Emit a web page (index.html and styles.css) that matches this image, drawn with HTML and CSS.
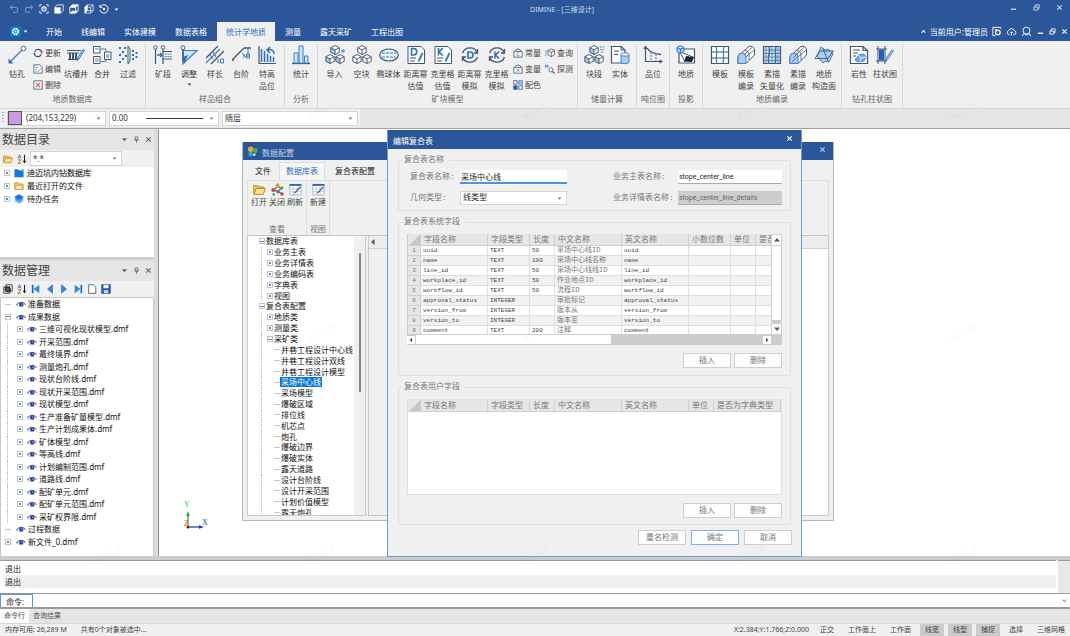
FILE: index.html
```html
<!DOCTYPE html>
<html lang="zh-CN">
<head>
<meta charset="utf-8">
<title>DIMINE - [三维设计]</title>
<link rel="stylesheet" href="styles.css">
</head>
<body>
<svg class="defs" aria-hidden="true">
  <symbol id="i-undo" viewBox="0 0 12 12"><path d="M4 1.500 1.500 4 4 6.500M1.500 4H7.500a3 3 0 0 1 0 6H5" fill="none" stroke="currentColor" stroke-width="1.200"/></symbol>
  <symbol id="i-redo" viewBox="0 0 12 12"><path d="M8 1.500 10.500 4 8 6.500M10.500 4H4.500a3 3 0 0 0 0 6H7" fill="none" stroke="currentColor" stroke-width="1.200"/></symbol>
  <symbol id="i-target" viewBox="0 0 12 12"><path d="M1 3.500V1H3.500M8.500 1H11V3.500M11 8.500V11H8.500M3.500 11H1V8.500" fill="none" stroke="currentColor"/><circle cx="6" cy="6" r="2.600" fill="none" stroke="currentColor" stroke-width="1.300"/><circle cx="6" cy="6" r="1" fill="currentColor"/></symbol>
  <symbol id="i-box" viewBox="0 0 12 12"><path d="M1 4 4 1H11V8L8 11H1Z" fill="none" stroke="currentColor"/><path d="M1 4H8V11H1Z" fill="currentColor"/></symbol>
  <symbol id="i-box-top" viewBox="0 0 12 12"><path d="M1 4 4 1H11V8L8 11H1ZM1 4H8V11M8 4 11 1" fill="none" stroke="currentColor"/><path d="M1 11 4 8H11L8 11ZM1 4 4 1H11L8 4Z" fill="currentColor"/></symbol>
  <symbol id="i-box-side" viewBox="0 0 12 12"><path d="M1 4 4 1H11V8L8 11H1ZM1 4H8V11M8 4 11 1M4 1V8H11M4 8 1 11" fill="none" stroke="currentColor" stroke-width=".8"/><path d="M1 4 4 1V8L1 11Z" fill="currentColor"/></symbol>
  <symbol id="i-rotate" viewBox="0 0 12 12"><path d="M1.500 3.500A5 5 0 1 1 1 7M1 1V4H4" fill="none" stroke="currentColor" stroke-width="1.200"/><circle cx="6" cy="6" r="1.500" fill="currentColor"/></symbol>
  <symbol id="i-app" viewBox="0 0 12 12"><rect width="12" height="12" fill="#0c7ac4"/><circle cx="6" cy="6" r="3" fill="none" stroke="#fff" stroke-width="2" stroke-dasharray="1.800 .55"/><circle cx="6" cy="6" r="1" fill="#fff"/></symbol>
  <symbol id="i-min" viewBox="0 0 8 8"><path d="M1 6H7" stroke="currentColor" stroke-width="1.500"/></symbol>
  <symbol id="i-restore" viewBox="0 0 8 8"><path d="M1 3.500H5.500V7H1ZM2.500 3.500V1H7V5H5.500" fill="none" stroke="currentColor"/></symbol>
  <symbol id="i-close" viewBox="0 0 8 8"><path d="M1.500 1.500 6.500 6.500M6.500 1.500 1.500 6.500" stroke="currentColor" stroke-width="1.200"/></symbol>
  <symbol id="i-caret" viewBox="0 0 8 8"><path d="M1 2.500H7L4 6Z" fill="currentColor"/></symbol>
  <symbol id="i-up" viewBox="0 0 8 8"><path d="M1 5.500H7L4 2Z" fill="currentColor"/></symbol>
  <symbol id="i-left" viewBox="0 0 8 8"><path d="M5.500 1V7L2 4Z" fill="currentColor"/></symbol>
  <symbol id="i-right" viewBox="0 0 8 8"><path d="M2.500 1V7L6 4Z" fill="currentColor"/></symbol>
  <symbol id="i-chev" viewBox="0 0 8 8"><path d="M1 2.500 4 6 7 2.500" fill="none" stroke="currentColor"/></symbol>
  <symbol id="i-chevup" viewBox="0 0 8 8"><path d="M1 6 4 2.500 7 6" fill="none" stroke="currentColor" stroke-width="1.700"/></symbol>
  <symbol id="i-pin" viewBox="0 0 8 8"><path d="M2.500 1H5.500V4.500H2.500ZM1.500 4.500H6.500M4 4.500V8" fill="none" stroke="currentColor" stroke-width=".9"/></symbol>
  <symbol id="i-usergear" viewBox="0 0 12 12"><path d="M10.500 3V1.500H2V10.500H5" fill="none" stroke="currentColor"/><circle cx="7.500" cy="7" r="2.500" fill="none" stroke="currentColor" stroke-width="1.300"/><path d="M4 4H6" stroke="currentColor"/></symbol>
  <symbol id="i-cloud" viewBox="0 0 12 12"><path d="M4 9.500H3A2.400 2.400 0 0 1 3 5 3.200 3.200 0 0 1 9 5 2.300 2.300 0 0 1 9 9.500H8M6 10.500V6.500M4.300 8 6 6.300 7.700 8" fill="none" stroke="currentColor"/></symbol>
  <symbol id="i-user" viewBox="0 0 12 12"><circle cx="6" cy="5" r="3.800" fill="none" stroke="currentColor"/><path d="M3 8 1.500 11M9 8 10.500 11M4 9.500H8" fill="none" stroke="currentColor"/></symbol>

  <symbol id="r-drill" viewBox="0 0 20 20"><path d="M15.500 4.500 3 17" stroke="#4b78b0" stroke-width="1.200"/><circle cx="16.500" cy="3.500" r="2.300" fill="#fff" stroke="#50607a"/><path d="M1.500 18.500V13.500L6.500 18.500Z" fill="#2b6fc4"/></symbol>
  <symbol id="r-trench" viewBox="0 0 20 20"><path d="M1 5.500H15M1 8H13M2 14.500H12" stroke="#44546a" stroke-width="1.200"/><path d="M4 8V14M7 8V14M10 8V14" stroke="#44546a" stroke-width="2"/><path d="M18.500 5 13 14 11 16 11.800 12.500 17 4.500Z" fill="#a9cdf5" stroke="#3b7fcc"/></symbol>
  <symbol id="r-merge" viewBox="0 0 20 20"><g fill="#fff" stroke="#44546a"><path d="M1.500 1.500H8V8H1.500ZM1.500 11.500H8V18.500H1.500ZM12.500 7H19V14.500H12.500Z"/></g><path d="M3 4H6.500M3 14H6.500M3 16H6.500M14 10H17.500M14 12H17.500" stroke="#3b7fcc"/><path d="M9 4H14V6.500M9 16.500H14V15" fill="none" stroke="#3b7fcc"/></symbol>
  <symbol id="r-filter" viewBox="0 0 20 20"><g fill="#2b6fc4"><path d="M1 2h2v2H1zM4 6h2v2H4zM1 9h2v2H1zM4 13h2v2H4zM1 16h2v2H1zM6 2h2v2H6zM7 10h2v2H7zM14 5h2v2h-2zM14 9h2v2h-2zM14 13h2v2h-2zM17.500 7h2v2h-2zM17.500 11h2v2h-2z"/></g><path d="M10 1 12 4V16L10 19Z" fill="#fff" stroke="#44546a"/></symbol>
  <symbol id="r-seg" viewBox="0 0 20 20"><path d="M2.500 4V19M10 4V19" stroke="#44546a" stroke-width="1.200"/><circle cx="2.500" cy="2.500" r="1.700" fill="#fff" stroke="#44546a"/><circle cx="10" cy="2.500" r="1.700" fill="#fff" stroke="#44546a"/><path d="M4 10H9M7 8 9 10 7 12" stroke="#2b6fc4" fill="none" stroke-width="1.300"/><path d="M10 6.500H19M10 14H19" stroke="#44546a"/><path d="M12 9H19M12 11.500H19" stroke="#2b6fc4" stroke-dasharray="1.500 1"/></symbol>
  <symbol id="r-adjust" viewBox="0 0 20 20"><path d="M4 5V19L18 5.500H5" fill="#cfe3fa" stroke="#3b7fcc" stroke-width="1.200"/><path d="M4 5V17" stroke="#44546a" stroke-width="1.500"/><circle cx="4" cy="2.700" r="2" fill="#fff" stroke="#44546a"/><path d="M4 12 9 10 5 19Z" fill="#2b6fc4"/></symbol>
  <symbol id="r-length" viewBox="0 0 20 20"><path d="M1 13 13 1M6 19 19 6" stroke="#44546a" stroke-width="1.300"/><path d="M1 18 15 4M8 7 11 12M5 10 8 14" stroke="#3b7fcc" stroke-width="1.200"/><path d="M13 14V18M15.500 14H18.500V18H15.500Z" fill="none" stroke="#3b7fcc"/></symbol>
  <symbol id="r-step" viewBox="0 0 20 20"><path d="M1 15 13 3M1 15H3M13 3H20" stroke="#44546a" stroke-width="1.300"/><path d="M17 3V12M11 8 15 12" stroke="#3b7fcc"/><path d="M13 9V13M15.500 9H18.500V13H15.500Z" fill="none" stroke="#3b7fcc"/></symbol>
  <symbol id="r-high" viewBox="0 0 20 20"><path d="M2 1V18.500H19" fill="none" stroke="#44546a" stroke-width="1.200"/><path d="M4.500 17V4M7.500 17V6M10.500 17V9M13.500 17V11M16.500 17V12" stroke="#2b6fc4" stroke-width="1.500"/><path d="M17 9C17 5 14 4 11 5M13 2 10 5 13 8" stroke="#2b6fc4" fill="none" stroke-width="1.500"/></symbol>
  <symbol id="r-stat" viewBox="0 0 20 20"><path d="M1 18.500H19" stroke="#44546a" stroke-width="1.300"/><path d="M3 8H7V18H3ZM8 1H12V18H8ZM13.500 11H17V18H13.500Z" fill="#cfe3fa" stroke="#3b7fcc"/></symbol>
  <symbol id="cube" viewBox="0 0 10 10"><path d="M5 .6 9.200 2.700V7.300L5 9.500 .8 7.300V2.700Z" fill="#fff" stroke="#44546a" stroke-width=".95"/><path d="M.8 2.700 5 5 9.200 2.700M5 5V9.500" fill="none" stroke="#44546a" stroke-width=".95"/></symbol>
  <symbol id="cubeb" viewBox="0 0 10 10"><path d="M5 .6 9.200 2.700V7.300L5 9.500 .8 7.300V2.700Z" fill="#fff"/><path d="M.8 2.700 5 5V9.500L.8 7.300Z" fill="#9cc8f8"/><path d="M5 .6 9.200 2.700V7.300L5 9.500 .8 7.300V2.700ZM.8 2.700 5 5 9.200 2.700M5 5V9.500" fill="none" stroke="#44546a" stroke-width=".95"/></symbol>
  <symbol id="r-import" viewBox="0 0 20 20"><use href="#cubeb" x="5" y="0" width="10" height="10"/><use href="#cubeb" x="0" y="9" width="10" height="10"/><use href="#cubeb" x="10" y="9" width="10" height="10"/><path d="M16 6H20M18 4V8" stroke="#3b7fcc"/></symbol>
  <symbol id="r-cubes" viewBox="0 0 20 20"><use href="#cube" x="5" y="0" width="10" height="10"/><use href="#cube" x="0" y="9" width="10" height="10"/><use href="#cube" x="10" y="9" width="10" height="10"/></symbol>
  <symbol id="r-ellipse" viewBox="0 0 20 20"><ellipse cx="10" cy="10" rx="9.300" ry="6" fill="#e8f2fd" stroke="#44546a" stroke-width="1.200"/><path d="M3 8H17M3 12H17" stroke="#3b7fcc" stroke-dasharray="3 1"/></symbol>
  <symbol id="r-docD" viewBox="0 0 20 20"><path d="M2 1.500H15L18.500 5V18.500H2Z" fill="#fff" stroke="#44546a"/><path d="M5.500 3.500H7.500A3 3 0 0 1 7.500 10H5.500Z" fill="none" stroke="#2b6fc4" stroke-width="1.600"/><path d="M4 13H10M4 16H9" stroke="#44546a"/><path d="M16.500 8 12.500 16.500" stroke="#3b7fcc" stroke-width="2"/></symbol>
  <symbol id="r-docK" viewBox="0 0 20 20"><path d="M2 1.500H15L18.500 5V18.500H2Z" fill="#fff" stroke="#44546a"/><path d="M5.500 3V10.500M10 3 6 7 10 10.500" fill="none" stroke="#2b6fc4" stroke-width="1.600"/><path d="M4 13H10M4 16H9" stroke="#44546a"/><path d="M16.500 8 12.500 16.500" stroke="#3b7fcc" stroke-width="2"/></symbol>
  <symbol id="r-cirD" viewBox="0 0 20 20"><path d="M2.500 8A8 8 0 0 1 17.500 8M17.500 12A8 8 0 0 1 2.500 12M17.500 4V8H14M2.500 16V12H6" fill="none" stroke="#44546a" stroke-width="1.300"/><path d="M8 7H10A3 3 0 0 1 10 13H8Z" fill="none" stroke="#2b6fc4" stroke-width="1.600"/></symbol>
  <symbol id="r-cirK" viewBox="0 0 20 20"><path d="M2.500 8A8 8 0 0 1 17.500 8M17.500 12A8 8 0 0 1 2.500 12M17.500 4V8H14M2.500 16V12H6" fill="none" stroke="#44546a" stroke-width="1.300"/><path d="M8 6.500V13.500M12 6.500 8.500 10 12 13.500" fill="none" stroke="#2b6fc4" stroke-width="1.500"/></symbol>
  <symbol id="r-blocks" viewBox="0 0 20 20"><use href="#cubeb" x="5" y="0" width="10" height="10"/><use href="#cubeb" x="0" y="9" width="10" height="10"/><use href="#cubeb" x="10" y="9" width="10" height="10"/><path d="M16 2H20M16 4.500H20M17 7H20" stroke="#3b7fcc" stroke-dasharray="1.500 1"/></symbol>
  <symbol id="r-solid" viewBox="0 0 20 20"><path d="M12 18H1.500V1.500H11L15 5V8" fill="#fff" stroke="#44546a" stroke-width="1.200"/><path d="M4 6H9M4 9.500H8M11 1.500V5H15" fill="none" stroke="#44546a"/><path d="M11 9.500V17A4 1.700 0 0 0 19 17V9.500" fill="#a9cdf5" stroke="#3b7fcc"/><ellipse cx="15" cy="9.500" rx="4" ry="1.700" fill="#fff" stroke="#3b7fcc"/></symbol>
  <symbol id="r-grade" viewBox="0 0 20 20"><path d="M2.500 2V16.500H18M1 4 2.500 1.500 4 4M16.500 15 19 16.500 16.500 18" fill="none" stroke="#44546a" stroke-width="1.200"/><path d="M4 3C7 8 12 9 18 9.500" fill="none" stroke="#44546a" stroke-width="1.300"/><path d="M8 7V16M13 9V16" stroke="#3b7fcc" stroke-dasharray="2 1"/></symbol>
  <symbol id="r-proj" viewBox="0 0 20 20"><path d="M3 4H18.500V18H3Z" fill="#fff" stroke="#44546a" stroke-width="1.200"/><path d="M5 7 17 12M5 9 9 17" stroke="#44546a"/><path d="M10 11 18 12 16 17 8 16.500Z" fill="#16213a"/><path d="M4.500 .7 8 2.500V6.500L4.500 8.500 1 6.500V2.500ZM1 2.500 4.500 4.500 8 2.500M4.500 4.500V8.500" fill="#a9d4ff" stroke="#2b6fc4"/></symbol>
  <symbol id="r-tpl" viewBox="0 0 20 20"><path d="M1.500 1.500H18.500V18.500H1.500ZM1.500 7H18.500M1.500 13H18.500" fill="#fff" stroke="#44546a" stroke-width="1.200"/><path d="M6 1.500C8 6 5 12 7 18.500M14 1.500C12 7 15 12 13 18.500" fill="none" stroke="#3b7fcc" stroke-width="1.200"/></symbol>
  <symbol id="r-tunnel" viewBox="0 0 20 20"><path d="M2 18.500V12A4 4 0 0 1 5 8.500L13 1.500A4 4 0 0 1 18.500 4.500V10L10 18.500Z" fill="#fff" stroke="#44546a"/><path d="M2 18.500V12A4 4 0 0 1 10 12V18.500Z" fill="#a9cdf5" stroke="#3b7fcc"/><path d="M8.500 9 16 2.500M10 12 18 5M9 5 13 8V15" fill="none" stroke="#44546a" stroke-width=".8"/></symbol>
  <symbol id="r-vector" viewBox="0 0 20 20"><path d="M1.500 1.500H18.500V18.500H1.500Z" fill="#cfe3fa" stroke="#44546a" stroke-width="1.200"/><path d="M1.500 5H18.500M1.500 8.500H18.500M1.500 12H18.500M1.500 15.500H18.500M4 1.500V18.500M10 1.500V18.500M16 1.500V18.500" stroke="#44546a" stroke-width=".6"/><path d="M7 1.500C9 6 5 12 7 18.500M14 1.500C12 7 15 12 13 18.500" fill="none" stroke="#2b6fc4" stroke-width="1.500"/></symbol>
  <symbol id="r-sketch" viewBox="0 0 20 20"><path d="M2 18.500V12A4 4 0 0 1 5 8.500L13 1.500A4 4 0 0 1 18.500 4.500V10L10 18.500Z" fill="#fff" stroke="#44546a"/><path d="M2 18.500V12A4 4 0 0 1 10 12V18.500Z" fill="#a9cdf5" stroke="#3b7fcc"/><path d="M8.500 9 16 2.500M10 12 18 5M9 5 13 8V15" fill="none" stroke="#44546a" stroke-width=".8"/><path d="M5 13 14 4M4 17 9 12" stroke="#3b7fcc"/></symbol>
  <symbol id="r-plane" viewBox="0 0 20 20"><path d="M7 2 11 5 14 4 19 9 15 17 12 16 9 18 3 11Z" fill="#a9cdf5" stroke="#3b7fcc"/><path d="M1 13.500 6 6H19.500L14 13.500ZM9 3.500 14 16" fill="none" stroke="#44546a" stroke-width=".9"/></symbol>
  <symbol id="r-rock" viewBox="0 0 20 20"><path d="M1.500 1.500H14L18.500 5.500V18.500H1.500ZM14 1.500V5.500H18.500" fill="#fff" stroke="#44546a" stroke-width="1.200"/><path d="M4 5H11M4 8H9M4 11H7" stroke="#44546a"/><path d="M6 15 10 10 15 9 17 12 15 16 9 17Z" fill="#6aaef5" stroke="#2b6fc4" stroke-width=".8"/><path d="M10 10 12 13 17 12M12 13 11 17" stroke="#fff" fill="none" stroke-width=".8"/></symbol>
  <symbol id="r-col" viewBox="0 0 20 20"><path d="M3 1V19M10 1V19M1 4H12M1 16H12" stroke="#44546a"/><path d="M4 4.500H9V15.500H4Z" fill="#1f5fc0"/><path d="M18.500 6 12 15 10 16.500 11 13.500 17 5Z" fill="#a9cdf5" stroke="#3b7fcc"/></symbol>

  <symbol id="s-refresh" viewBox="0 0 12 12"><path d="M2 4.500A4.500 4.500 0 0 1 10.500 5M10 7.500A4.500 4.500 0 0 1 1.500 7" fill="none" stroke="#44546a" stroke-width="1.400"/><path d="M8.500 4.500H12L10.500 7ZM0 7.500H3.500L1.500 5Z" fill="#2b6fc4"/></symbol>
  <symbol id="s-edit" viewBox="0 0 12 12"><path d="M1 1H8L11 4V11H1Z" fill="#fff" stroke="#44546a"/><path d="M9.500 5 6 9.500M3 4H6M3 6.500H5M3 9H4.500" stroke="#3b7fcc"/></symbol>
  <symbol id="s-del" viewBox="0 0 12 12"><path d="M1 1H11V11H1Z" fill="#fff" stroke="#44546a"/><path d="M3.500 3.500 8.500 8.500M8.500 3.500 3.500 8.500" stroke="#e2552f" stroke-width="1.400"/></symbol>
  <symbol id="s-const" viewBox="0 0 12 12"><path d="M1 4H11V11H1ZM2.500 4 4 1.500H8L9.500 4" fill="#fff" stroke="#44546a"/><path d="M7.800 6A2 2 0 1 0 7.800 9" stroke="#3b7fcc" fill="none"/></symbol>
  <symbol id="s-var" viewBox="0 0 12 12"><path d="M1 4H11V11H1ZM2.500 4 4 1.500H8L9.500 4" fill="#fff" stroke="#44546a"/><path d="M4 5.500 8 9.500M8 5.500 4 9.500" stroke="#3b7fcc"/></symbol>
  <symbol id="s-color" viewBox="0 0 12 12"><path d="M.8 .8H5V5H.8ZM7 7H11.200V11.200H7Z" fill="#fff" stroke="#44546a"/><path d="M7 .8H11.200V5H7Z" fill="#a9cdf5" stroke="#3b7fcc"/><path d="M.3 6.500H5.500V11.700H.3Z" fill="#1f5fc0"/></symbol>
  <symbol id="s-query" viewBox="0 0 12 12"><path d="M7.500 1 11.500 3V8L7.500 10.500 3.500 8V3ZM3.500 3 7.500 5.500 11.500 3M7.500 5.500V10.500" fill="#fff" stroke="#44546a"/><path d="M0 3.500H2M0 6H2M0 8.500H2" stroke="#3b7fcc"/></symbol>
  <symbol id="s-probe" viewBox="0 0 12 12"><circle cx="7" cy="7" r="2.500" fill="#fff" stroke="#44546a"/><path d="M9 9 11.500 11.500" stroke="#44546a" stroke-width="1.300"/><path d="M1 1V5M3 1V4M0 2.500H4.500" stroke="#3b7fcc"/></symbol>

  <symbol id="t-folder" viewBox="0 0 12 12"><path d="M.7 10V2.500H4.500L5.500 3.700H9.500V5" fill="#f7c95a" stroke="#b07a1c" stroke-width=".8"/><path d="M.8 10.500 3 5H11.500L9.500 10.500Z" fill="#ffe08a" stroke="#b07a1c" stroke-width=".8"/></symbol>
  <symbol id="t-sort" viewBox="0 0 12 12"><path d="M1 5.500 3 .8 5 5.500M1.800 4H4.200" fill="none" stroke="#3b6fc0"/><path d="M1.200 7H4.800L1.200 11.200H4.800" fill="none" stroke="#a0603a"/><path d="M9 1V9" stroke="#222" stroke-width="1.300"/><path d="M6.800 8H11.200L9 11.500Z" fill="#222"/></symbol>
  <symbol id="t-db" viewBox="0 0 12 12"><path d="M.5 1.500H5L6 3H11.500V11H.5Z" fill="#0f7be0"/><path d="M6 3 11.500 1V3Z" fill="#4cc04c"/></symbol>
  <symbol id="t-open" viewBox="0 0 12 12"><path d="M.8 10V2H5L6 3.500H11V10Z" fill="#f5c95c" stroke="#b98a2a" stroke-width=".8"/><path d="M1 5.500H9L11 10H2.500Z" fill="#ffe9a8" stroke="#b98a2a" stroke-width=".6"/></symbol>
  <symbol id="t-layers" viewBox="0 0 12 12"><path d="M6 5.500 12 8.500 6 11.800 0 8.500Z" fill="#7cbcf5"/><path d="M6 3 12 6 6 9.200 0 6Z" fill="#3f9bee"/><path d="M6 .3 12 3.500 6 6.800 0 3.500Z" fill="#1179dc"/></symbol>
  <symbol id="t-eye" viewBox="0 0 12 12"><path d="M.5 7.500C2.500 3 9 2.500 11.500 7" fill="none" stroke="#5566a8" stroke-width="1.400"/><circle cx="6.300" cy="6.600" r="2.700" fill="#2c3f95"/><circle cx="6.900" cy="6" r=".7" fill="#fff"/><path d="M1 8Q5 9.800 9 9" fill="none" stroke="#9aa6d4" stroke-width=".8"/></symbol>
  <symbol id="t-stack" viewBox="0 0 12 12"><path d="M3.500 1H11V8.500H3.500ZM1 3.500H8.500V11H1Z" fill="#fff" stroke="#222"/><circle cx="5.500" cy="6.500" r="3" fill="#44546a" stroke="#111"/></symbol>
  <symbol id="t-first" viewBox="0 0 12 12"><path d="M2 1V11" stroke="#1668c8" stroke-width="2"/><path d="M10 1V11L3 6Z" fill="#2f8be8"/></symbol>
  <symbol id="t-prev" viewBox="0 0 12 12"><path d="M9 1V11L3 6Z" fill="#2f8be8" stroke="#1668c8" stroke-width=".7"/></symbol>
  <symbol id="t-next" viewBox="0 0 12 12"><path d="M3 1V11L9 6Z" fill="#2f8be8" stroke="#1668c8" stroke-width=".7"/></symbol>
  <symbol id="t-last" viewBox="0 0 12 12"><path d="M10 1V11" stroke="#1668c8" stroke-width="2"/><path d="M2 1V11L9 6Z" fill="#2f8be8"/></symbol>
  <symbol id="t-page" viewBox="0 0 12 12"><path d="M2 .8H7.500L10.500 3.800V11.200H2Z" fill="#fff" stroke="#44546a"/></symbol>
  <symbol id="t-save" viewBox="0 0 12 12"><path d="M.8 .8H11.200V11.200H.8Z" fill="#2f62b8" stroke="#1c3f80" stroke-width=".8"/><path d="M3 1H9V5H3Z" fill="#fff"/><path d="M3.500 7.500H8.500V11H3.500Z" fill="#cfd8ea"/></symbol>
  <symbol id="w-logo" viewBox="0 0 12 12"><circle cx="4" cy="3.500" r="3" fill="#f2a531"/><circle cx="9" cy="5" r="2.700" fill="#49b04c"/><circle cx="4" cy="9" r="2.600" fill="#31a2e6"/><circle cx="8" cy="9.500" r="1.500" fill="#e8e04a"/></symbol>
  <symbol id="w-tree" viewBox="0 0 12 12"><path d="M6 3 2.500 7 6.500 7.500 10 10M6 3 9.500 5 6.500 7.500" stroke="#555" fill="none"/><g><circle cx="6" cy="2" r="1.800" fill="#d8a030"/><circle cx="2" cy="6.500" r="1.800" fill="#d64534"/><circle cx="10" cy="4.500" r="1.500" fill="#4fae3e"/><circle cx="6.500" cy="8" r="1.600" fill="#3d73d0"/><circle cx="10.200" cy="10.200" r="1.600" fill="#d64534"/><circle cx="2.500" cy="10.500" r="1.200" fill="#49b04c"/></g></symbol>
  <symbol id="w-form" viewBox="0 0 12 12"><path d="M.8 1.500H11.200V11H.8Z" fill="#fff" stroke="#8aa6cf" stroke-width=".7"/><path d="M.5 1H11.500V2.600H.5Z" fill="#2b5ca8"/><path d="M1 5.500H11M1 8H11M4 3V11M7.500 3V11" stroke="#9db8dd" stroke-width=".6"/><path d="M10.500 3.500 5 9.500" stroke="#5b6472" stroke-width="1.200"/></symbol>
  <symbol id="axes" viewBox="0 0 30 32"><path d="M8 27V14" stroke="#1d9a3c" stroke-width="1.200"/><path d="M8 11 6.300 16H9.700Z" fill="#1d9a3c"/><path d="M8 27H20" stroke="#1238c0" stroke-width="1.200"/><path d="M24 27 19 25.300V28.700Z" fill="#1238c0"/><circle cx="8" cy="27" r="1.500" fill="#8a1a10"/></symbol>
</svg>

<header class="titlebar">
  <div class="quick">
    <button class="ib dim" aria-label="撤销"><svg class="ic"><use href="#i-undo"/></svg></button>
    <button class="ib dim" aria-label="重做"><svg class="ic"><use href="#i-redo"/></svg></button>
    <button class="ib" aria-label="定位"><svg class="ic"><use href="#i-target"/></svg></button>
    <button class="ib" aria-label="前视图"><svg class="ic"><use href="#i-box"/></svg></button>
    <button class="ib" aria-label="俯视图"><svg class="ic"><use href="#i-box-top"/></svg></button>
    <button class="ib" aria-label="侧视图"><svg class="ic"><use href="#i-box-side"/></svg></button>
    <button class="ib" aria-label="旋转"><svg class="ic"><use href="#i-rotate"/></svg></button>
    <button class="ib more" aria-label="自定义"><svg class="ic mini"><use href="#i-caret"/></svg></button>
  </div>
  <h1 class="apptitle">DIMINE - [三维设计]</h1>
  <div class="winctl">
    <button class="ib" aria-label="最小化"><svg class="ic tiny"><use href="#i-min"/></svg></button>
    <button class="ib" aria-label="还原"><svg class="ic tiny"><use href="#i-restore"/></svg></button>
    <button class="ib" aria-label="关闭"><svg class="ic tiny"><use href="#i-close"/></svg></button>
  </div>
</header>

<nav class="tabs">
  <button class="appbtn" aria-label="应用菜单"><svg class="ic"><use href="#i-app"/></svg><svg class="ic mini"><use href="#i-caret"/></svg></button>
  <button class="tab">开始</button>
  <button class="tab">线编辑</button>
  <button class="tab">实体建模</button>
  <button class="tab">数据表格</button>
  <button class="tab active">统计学地质</button>
  <button class="tab">测量</button>
  <button class="tab">露天采矿</button>
  <button class="tab">工程出图</button>
  <div class="account">
    <svg class="ic mini"><use href="#i-chevup"/></svg>
    <span>当前用户:管理员</span>
    <button class="ib" aria-label="设置"><svg class="ic"><use href="#i-usergear"/></svg></button>
    <button class="ib" aria-label="云"><svg class="ic"><use href="#i-cloud"/></svg></button>
    <button class="ib" aria-label="用户"><svg class="ic"><use href="#i-user"/></svg></button>
    <button class="ib" aria-label="最小化"><svg class="ic tiny"><use href="#i-min"/></svg></button>
    <button class="ib" aria-label="还原"><svg class="ic tiny"><use href="#i-restore"/></svg></button>
    <button class="ib" aria-label="关闭"><svg class="ic tiny"><use href="#i-close"/></svg></button>
  </div>
</nav>

<section class="ribbon">
  <div class="group wide"><div class="tools">
    <button class="big"><svg><use href="#r-drill"/></svg>钻孔</button>
    <div class="small"><button><svg><use href="#s-refresh"/></svg>更新</button><button><svg><use href="#s-edit"/></svg>编辑</button><button><svg><use href="#s-del"/></svg>删除</button></div>
    <button class="big"><svg><use href="#r-trench"/></svg>坑槽井</button>
    <button class="big"><svg><use href="#r-merge"/></svg>合并</button>
    <button class="big"><svg><use href="#r-filter"/></svg>过滤</button>
  </div><h2>地质数据库</h2></div>
  <div class="group wide"><div class="tools">
    <button class="big"><svg><use href="#r-seg"/></svg>矿段</button>
    <button class="big"><svg><use href="#r-adjust"/></svg>调整<svg class="drop"><use href="#i-caret"/></svg></button>
    <button class="big"><svg><use href="#r-length"/></svg>样长</button>
    <button class="big"><svg><use href="#r-step"/></svg>台阶</button>
    <button class="big"><svg><use href="#r-high"/></svg>特高<br>品位</button>
  </div><h2>样品组合</h2></div>
  <div class="group"><div class="tools">
    <button class="big"><svg><use href="#r-stat"/></svg>统计</button>
  </div><h2>分析</h2></div>
  <div class="group roomy"><div class="tools">
    <button class="big"><svg><use href="#r-import"/></svg>导入</button>
    <button class="big"><svg><use href="#r-cubes"/></svg>空块</button>
    <button class="big"><svg><use href="#r-ellipse"/></svg>椭球体</button>
    <button class="big"><svg><use href="#r-docD"/></svg>距离幂<br>估值</button>
    <button class="big"><svg><use href="#r-docK"/></svg>克里格<br>估值</button>
    <button class="big"><svg><use href="#r-cirD"/></svg>距离幂<br>模拟</button>
    <button class="big"><svg><use href="#r-cirK"/></svg>克里格<br>模拟</button>
    <div class="small"><button><svg><use href="#s-const"/></svg>常量</button><button><svg><use href="#s-var"/></svg>变量</button><button><svg><use href="#s-color"/></svg>配色</button></div>
    <div class="small"><button><svg><use href="#s-query"/></svg>查询</button><button><svg><use href="#s-probe"/></svg>探测</button></div>
  </div><h2>矿块模型</h2></div>
  <div class="group"><div class="tools">
    <button class="big"><svg><use href="#r-blocks"/></svg>块段</button>
    <button class="big"><svg><use href="#r-solid"/></svg>实体</button>
  </div><h2>储量计算</h2></div>
  <div class="group"><div class="tools">
    <button class="big"><svg><use href="#r-grade"/></svg>品位</button>
  </div><h2>吨位图</h2></div>
  <div class="group"><div class="tools">
    <button class="big"><svg><use href="#r-proj"/></svg>地质</button>
  </div><h2>投影</h2></div>
  <div class="group wide"><div class="tools">
    <button class="big"><svg><use href="#r-tpl"/></svg>模板</button>
    <button class="big"><svg><use href="#r-tunnel"/></svg>模板<br>编录</button>
    <button class="big"><svg><use href="#r-vector"/></svg>素描<br>矢量化</button>
    <button class="big"><svg><use href="#r-sketch"/></svg>素描<br>编录</button>
    <button class="big"><svg><use href="#r-plane"/></svg>地质<br>构造面</button>
  </div><h2>地质编录</h2></div>
  <div class="group wide"><div class="tools">
    <button class="big"><svg><use href="#r-rock"/></svg>岩性</button>
    <button class="big"><svg><use href="#r-col"/></svg>柱状图</button>
  </div><h2>钻孔柱状图</h2></div>
</section>

<section class="props">
  <div class="propsin">
    <span class="grip"></span>
    <label class="combo c-color"><span class="swatch"></span><select aria-label="颜色"><option>(204,153,229)</option></select><svg class="ic mini"><use href="#i-caret"/></svg></label>
    <label class="combo c-line"><select aria-label="线宽"><option>0.00</option></select><span class="rule"></span><svg class="ic mini"><use href="#i-caret"/></svg></label>
    <label class="combo c-layer"><select aria-label="线型"><option>随层</option></select><svg class="ic mini"><use href="#i-caret"/></svg></label>
  </div>
</section>

<main class="work">
  <aside class="dock">
    <section class="pane catalog">
      <header class="panehead"><h2>数据目录</h2>
        <button class="ib" aria-label="菜单"><svg class="ic tiny"><use href="#i-caret"/></svg></button><button class="ib" aria-label="固定"><svg class="ic tiny"><use href="#i-pin"/></svg></button><button class="ib" aria-label="关闭"><svg class="ic tiny"><use href="#i-close"/></svg></button></header>
      <div class="panebar">
        <button class="ib" aria-label="打开"><svg class="ic"><use href="#t-folder"/></svg></button><button class="ib" aria-label="排序"><svg class="ic"><use href="#t-sort"/></svg></button>
        <label class="combo filter"><select aria-label="过滤"><option>*.*</option></select><svg class="ic mini"><use href="#i-caret"/></svg></label>
      </div>
      <ul class="tree files">
        <li><i class="ex"></i><svg class="ic"><use href="#t-db"/></svg><span class="soft">迪迈坑内钻数据库</span></li>
        <li><i class="ex"></i><svg class="ic"><use href="#t-open"/></svg><span>最近打开的文件</span></li>
        <li><i class="ex"></i><svg class="ic"><use href="#t-layers"/></svg><span>待办任务</span></li>
      </ul>
    </section>
    <section class="pane manage">
      <header class="panehead"><h2>数据管理</h2>
        <button class="ib" aria-label="菜单"><svg class="ic tiny"><use href="#i-caret"/></svg></button><button class="ib" aria-label="固定"><svg class="ic tiny"><use href="#i-pin"/></svg></button><button class="ib" aria-label="关闭"><svg class="ic tiny"><use href="#i-close"/></svg></button></header>
      <div class="panebar">
        <button class="ib" aria-label="显示"><svg class="ic"><use href="#t-stack"/></svg></button><button class="ib" aria-label="排序"><svg class="ic"><use href="#t-sort"/></svg></button><button class="ib" aria-label="首个"><svg class="ic"><use href="#t-first"/></svg></button><button class="ib" aria-label="上一个"><svg class="ic"><use href="#t-prev"/></svg></button><button class="ib" aria-label="下一个"><svg class="ic"><use href="#t-next"/></svg></button><button class="ib" aria-label="末个"><svg class="ic"><use href="#t-last"/></svg></button><button class="ib" aria-label="新建"><svg class="ic"><use href="#t-page"/></svg></button><button class="ib" aria-label="保存"><svg class="ic"><use href="#t-save"/></svg></button>
      </div>
      <ul class="tree layers">
        <li><i class="ex none"></i><svg class="ic"><use href="#t-eye"/></svg><span class="soft">准备数据</span></li>
        <li><i class="ex open"></i><svg class="ic"><use href="#t-eye"/></svg><span>成果数据</span></li>
        <li class="sub"><i class="ex"></i><svg class="ic"><use href="#t-eye"/></svg><span>三维可视化现状模型.dmf</span></li>
        <li class="sub"><i class="ex"></i><svg class="ic"><use href="#t-eye"/></svg><span>开采范围.dmf</span></li>
        <li class="sub"><i class="ex"></i><svg class="ic"><use href="#t-eye"/></svg><span>最终境界.dmf</span></li>
        <li class="sub"><i class="ex"></i><svg class="ic"><use href="#t-eye"/></svg><span>测量炮孔.dmf</span></li>
        <li class="sub"><i class="ex"></i><svg class="ic"><use href="#t-eye"/></svg><span>现状台阶线.dmf</span></li>
        <li class="sub"><i class="ex"></i><svg class="ic"><use href="#t-eye"/></svg><span>现状开采范围.dmf</span></li>
        <li class="sub"><i class="ex"></i><svg class="ic"><use href="#t-eye"/></svg><span>现状模型.dmf</span></li>
        <li class="sub"><i class="ex"></i><svg class="ic"><use href="#t-eye"/></svg><span>生产准备矿量模型.dmf</span></li>
        <li class="sub"><i class="ex"></i><svg class="ic"><use href="#t-eye"/></svg><span>生产计划成果体.dmf</span></li>
        <li class="sub"><i class="ex"></i><svg class="ic"><use href="#t-eye"/></svg><span>矿体模型.dmf</span></li>
        <li class="sub"><i class="ex"></i><svg class="ic"><use href="#t-eye"/></svg><span>等高线.dmf</span></li>
        <li class="sub"><i class="ex"></i><svg class="ic"><use href="#t-eye"/></svg><span>计划编制范围.dmf</span></li>
        <li class="sub"><i class="ex"></i><svg class="ic"><use href="#t-eye"/></svg><span>道路线.dmf</span></li>
        <li class="sub"><i class="ex"></i><svg class="ic"><use href="#t-eye"/></svg><span>配矿单元.dmf</span></li>
        <li class="sub"><i class="ex"></i><svg class="ic"><use href="#t-eye"/></svg><span>配矿单元范围.dmf</span></li>
        <li class="sub"><i class="ex"></i><svg class="ic"><use href="#t-eye"/></svg><span>采矿权界限.dmf</span></li>
        <li><i class="ex none"></i><svg class="ic"><use href="#t-eye"/></svg><span>过程数据</span></li>
        <li><i class="ex"></i><svg class="ic"><use href="#t-eye"/></svg><span>新文件_0.dmf</span></li>
      </ul>
    </section>
  </aside>

  <section class="canvas">
    <div class="axes"><svg><use href="#axes"/></svg><span class="ay">Y</span><span class="ax">X</span><span class="az">Z</span></div>

    <section class="win config">
      <header class="winhead"><svg class="ic"><use href="#w-logo"/></svg><h2>数据配置</h2><button class="ib" aria-label="关闭"><svg class="ic tiny"><use href="#i-close"/></svg></button></header>
      <nav class="ctabs"><button>文件</button><button class="active">数据库表</button><button>复合表配置</button></nav>
      <div class="cribbon">
        <div class="cgroup"><div class="ctools"><button><svg><use href="#t-folder"/></svg>打开</button><button><svg><use href="#w-tree"/></svg>关闭</button><button><svg><use href="#w-form"/></svg>刷新</button></div><h3>查看</h3></div>
        <div class="cgroup"><div class="ctools"><button><svg><use href="#w-form"/></svg>新建</button></div><h3>视图</h3></div>
      </div>
      <div class="cbody">
        <div class="ctree">
          <ul class="tree db">
            <li><i class="ex open"></i><span>数据库表</span></li>
            <li class="l1"><i class="ex"></i><span>业务主表</span></li>
            <li class="l1"><i class="ex"></i><span>业务详情表</span></li>
            <li class="l1"><i class="ex"></i><span>业务编码表</span></li>
            <li class="l1"><i class="ex"></i><span>字典表</span></li>
            <li class="l1"><i class="ex"></i><span>视图</span></li>
            <li><i class="ex open"></i><span>复合表配置</span></li>
            <li class="l1"><i class="ex"></i><span>地质类</span></li>
            <li class="l1"><i class="ex"></i><span>测量类</span></li>
            <li class="l1"><i class="ex open"></i><span>采矿类</span></li>
            <li class="l2"><i class="ex none"></i><span>井巷工程设计中心线</span></li>
            <li class="l2"><i class="ex none"></i><span>井巷工程设计双线</span></li>
            <li class="l2"><i class="ex none"></i><span>井巷工程设计模型</span></li>
            <li class="l2"><i class="ex none"></i><span class="sel">采场中心线</span></li>
            <li class="l2"><i class="ex none"></i><span>采场模型</span></li>
            <li class="l2"><i class="ex none"></i><span>爆破区域</span></li>
            <li class="l2"><i class="ex none"></i><span>排位线</span></li>
            <li class="l2"><i class="ex none"></i><span>机芯点</span></li>
            <li class="l2"><i class="ex none"></i><span>炮孔</span></li>
            <li class="l2"><i class="ex none"></i><span>爆破边界</span></li>
            <li class="l2"><i class="ex none"></i><span>爆破实体</span></li>
            <li class="l2"><i class="ex none"></i><span>露天道路</span></li>
            <li class="l2"><i class="ex none"></i><span>设计台阶线</span></li>
            <li class="l2"><i class="ex none"></i><span>设计开采范围</span></li>
            <li class="l2"><i class="ex none"></i><span>计划价值模型</span></li>
            <li class="l2"><i class="ex none"></i><span>露天炮孔</span></li>
          </ul>
          <div class="cscroll"><i></i></div>
        </div>
        <div class="cview"><div class="cviewhead"><svg class="ic tiny"><use href="#i-left"/></svg></div><div class="cviewbody"><i></i></div></div>
      </div>
    </section>

    <section class="win dialog" role="dialog" aria-labelledby="dlg">
      <header class="winhead"><h2 id="dlg">编辑复合表</h2><button class="ib" aria-label="关闭"><svg class="ic tiny"><use href="#i-close"/></svg></button></header>
      <form class="dbody">
        <fieldset>
          <legend>复合表名称</legend>
          <div class="fields">
            <label for="f1">复合表名称:</label><input id="f1" class="focus" value="采场中心线">
            <label for="f2" class="second">业务主表名称:</label><input id="f2" value="stope_center_line">
            <label for="f3">几何类型:</label><span class="combo geo"><select id="f3"><option>线类型</option></select><svg class="ic mini"><use href="#i-caret"/></svg></span>
            <label for="f4" class="second">业务详情表名称:</label><input id="f4" class="off" value="stope_center_line_details" disabled>
          </div>
        </fieldset>
        <fieldset>
          <legend>复合表系统字段</legend>
          <div class="grid">
            <div class="gridclip">
              <table class="sys">
                <colgroup><col class="k0"><col class="k3"><col class="k2"><col class="k1"><col class="k3"><col class="k3"><col class="k2"><col class="k1"><col class="k3"></colgroup>
                <thead><tr><th class="corner"></th><th>字段名称</th><th>字段类型</th><th>长度</th><th>中文名称</th><th>英文名称</th><th>小数位数</th><th>单位</th><th>是否为字典类型</th></tr></thead>
                <tbody>
                <tr><th>1</th><td>uuid</td><td>TEXT</td><td>50</td><td>采场中心线ID</td><td>uuid</td><td></td><td></td><td></td></tr>
                <tr><th>2</th><td>name</td><td>TEXT</td><td>100</td><td>采场中心线名称</td><td>name</td><td></td><td></td><td></td></tr>
                <tr><th>3</th><td>line_id</td><td>TEXT</td><td>50</td><td>采场中心线线ID</td><td>line_id</td><td></td><td></td><td></td></tr>
                <tr><th>4</th><td>workplace_id</td><td>TEXT</td><td>50</td><td>作业地点ID</td><td>workplace_id</td><td></td><td></td><td></td></tr>
                <tr><th>5</th><td>workflow_id</td><td>TEXT</td><td>50</td><td>流程ID</td><td>workflow_id</td><td></td><td></td><td></td></tr>
                <tr><th>6</th><td>approval_status</td><td>INTEGER</td><td></td><td>审批标记</td><td>approval_status</td><td></td><td></td><td></td></tr>
                <tr><th>7</th><td>version_from</td><td>INTEGER</td><td></td><td>版本从</td><td>version_from</td><td></td><td></td><td></td></tr>
                <tr><th>8</th><td>version_to</td><td>INTEGER</td><td></td><td>版本至</td><td>version_to</td><td></td><td></td><td></td></tr>
                <tr><th>9</th><td>comment</td><td>TEXT</td><td>200</td><td>注释</td><td>comment</td><td></td><td></td><td></td></tr>
                </tbody>
              </table>
            </div>
            <div class="vbar"><svg class="ic tiny"><use href="#i-up"/></svg><i></i><svg class="ic tiny"><use href="#i-caret"/></svg></div>
            <div class="hbar"><svg class="ic tiny"><use href="#i-left"/></svg><i></i><svg class="ic tiny"><use href="#i-right"/></svg></div>
          </div>
          <div class="acts"><button type="button" class="btn">插入</button><button type="button" class="btn">删除</button></div>
        </fieldset>
        <fieldset class="grow">
          <legend>复合表用户字段</legend>
          <div class="usergrid">
            <table class="usr">
              <colgroup><col class="k0"><col class="k3"><col class="k2"><col class="k1"><col class="k3"><col class="k3"><col class="k1"><col class="k3"></colgroup>
              <thead><tr><th class="corner"></th><th>字段名称</th><th>字段类型</th><th>长度</th><th>中文名称</th><th>英文名称</th><th>单位</th><th>是否为字典类型</th></tr></thead>
            </table>
          </div>
          <div class="acts"><button type="button" class="btn">插入</button><button type="button" class="btn">删除</button></div>
        </fieldset>
        <div class="foot"><button type="button" class="btn">重名检测</button><button type="button" class="btn primary">确定</button><button type="button" class="btn">取消</button></div>
      </form>
    </section>
  </section>
</main>

<section class="console">
  <ul class="log"><li>退出</li><li>退出</li></ul>
  <div class="logbar"></div>
</section>
<div class="cmd"><label for="cmd">命令:</label><input id="cmd"><svg class="ic mini"><use href="#i-chev"/></svg></div>
<nav class="outtabs"><button class="active">命令行</button><button>查询结果</button></nav>
<footer class="status">
  <span>内存可用: 26,289 M</span><span>共有0个对象被选中...</span>
  <span class="coord">X:2.384;Y:1.766;Z:0.000</span>
  <div class="toggles"><button>正交</button><button>工作面上</button><button>工作面</button><button class="on">线宽</button><button class="on">线型</button><button class="on">捕捉</button><button>选择</button><button>三维网格</button></div>
</footer>

<div class="marks" aria-hidden="true">
  <span>迪迈科技</span><span>迪迈科技</span><span>迪迈科技</span><span>迪迈科技</span><span>迪迈科技</span>
  <span>迪迈科技</span><span>迪迈科技</span><span>迪迈科技</span><span>迪迈科技</span><span>迪迈科技</span>
  <span>迪迈科技</span><span>迪迈科技</span><span>迪迈科技</span><span>迪迈科技</span><span>迪迈科技</span>
</div>
</body>
</html>
```

FILE: styles.css
```css
* { box-sizing: border-box; }
body {
  margin: 0;
  height: 100vh;
  display: flex;
  flex-direction: column;
  overflow: hidden;
  position: relative;
  background: #f0f0f0;
  color: #222;
  font: 8px/12px "Noto Sans", "Noto Sans CJK SC", sans-serif;
}
button, input, select { font: inherit; color: inherit; margin: 0; padding: 0; border: 0; background: none; border-radius: 0; appearance: none; }
h1, h2, h3, ul { margin: 0; padding: 0; font: inherit; list-style: none; }
.defs { position: absolute; width: 0; height: 0; }
.ic { width: 11px; height: 11px; flex: none; display: block; }
.ic.tiny { width: 8px; height: 8px; }
.ic.mini { width: 5px; height: 5px; }
.ib { display: flex; align-items: center; justify-content: center; width: 15px; height: 14px; flex: none; }
.dim { opacity: .45; }

/* title bar and main tabs */
.titlebar { display: grid; grid-template-columns: 1fr auto 1fr; align-items: center; height: 22px; flex: none; background: #2b579a; color: #fff; }
.quick { display: flex; padding: 0 0 4px 6px; }
.quick .ic { width: 10px; height: 10px; }
.quick .more { width: 11px; }
.quick .mini { width: 5px; height: 5px; }
.apptitle { color: #d5deeb; font-size: 7px; padding: 0 0 2px 54px; }
.winctl { display: flex; justify-content: flex-end; gap: 8px; padding: 0 3px 7px 0; color: #d5deeb; }
.winctl .tiny { width: 7px; height: 7px; }
.tabs { display: flex; gap: 1px; height: 19px; flex: none; background: #2b579a; color: #fff; }
.appbtn { display: flex; align-items: center; gap: 2px; width: 36px; padding-left: 10px; }
.tab { padding: 0 9px; }
.tab.active { background: #f0f0f0; color: #2b70c4; }
.account { margin-left: auto; display: flex; align-items: center; }
.account > span { padding: 0 1px 0 4px; }
.account .tiny { width: 7px; height: 7px; }
.account .ib:nth-last-child(-n+3) { width: 12px; }

/* ribbon */
.ribbon { display: flex; flex: none; padding-top: 3px; border-bottom: 1px solid #d6d6d6; background: #f0f0f0; color: #444; }
.group { display: flex; flex-direction: column; padding: 1px 3px 3px; border-right: 1px solid #d8d8d8; }
.group.wide { padding-left: 4px; padding-right: 4px; }
.tools { display: flex; height: 48px; }
.group h2 { text-align: center; color: #666; white-space: nowrap; }
.big { width: 26px; display: flex; flex-direction: column; align-items: center; justify-content: flex-start; white-space: nowrap; line-height: 12px; }
.roomy .big { width: 27px; }
.big svg { width: 20px; height: 20px; margin-bottom: 3px; }
.big .drop { width: 5px; height: 5px; margin: 2px 0 0; }
.small { display: flex; flex-direction: column; width: 33px; }
.roomy .small { width: 32px; }
.small button { display: flex; align-items: center; gap: 2px; height: 16px; padding-left: 3px; }
.small svg { width: 10px; height: 10px; }

/* property bar */
.props { flex: none; height: 20px; background: #e5e5e5; border-bottom: 1px solid #9d9fa3; }
.propsin { display: inline-flex; align-items: center; gap: 3px; height: 18px; padding: 0 2px; background: #f0f0f0; }
.grip { width: 2px; height: 12px; background: repeating-linear-gradient(#aaa 0 1px, transparent 1px 3px); }
.combo { display: flex; align-items: center; height: 15px; padding-right: 4px; background: #fff; border: 1px solid #d4d4d4; color: #333; }
.combo select { flex: 1; min-width: 0; height: 100%; padding-left: 2px; }
.combo .mini { color: #777; }
.swatch { width: 14px; height: 14px; background: #cc99e5; border: 1px solid #555; }
.c-color { width: 99px; }
.c-color select { padding-left: 4px; }
.c-line { width: 110px; }
.c-line select { flex: none; width: 36px; }
.rule { flex: 1; margin-right: 6px; border-top: 1px solid #333; }
.c-layer { width: 136px; }

/* docked panes */
.work { flex: 1; min-height: 0; display: flex; }
.dock { width: 158px; flex: none; display: flex; flex-direction: column; border-right: 4px solid #dcdcdc; }
.pane { display: flex; flex-direction: column; }
.catalog { height: 131px; flex: none; border-bottom: 3px solid #cdcdcd; }
.manage { flex: 1; min-height: 0; }
.panehead { display: flex; align-items: center; height: 21px; flex: none; padding: 0 0 0 2px; background: #e5e5e5; color: #666; }
.panehead h2 { flex: 1; font-size: 12px; line-height: 20px; color: #444; }
.panehead .ib { width: 12px; }
.panehead .tiny { width: 7px; height: 7px; }
.panebar { display: flex; align-items: center; height: 17px; flex: none; padding-left: 1px; }
.panebar .ib { width: 14px; }
.manage .panebar { height: 16px; }
.panebar .ic { width: 10px; height: 10px; }
.filter { width: 92px; margin-left: 1px; }
.panebar .filter .mini { width: 5px; height: 5px; }
.tree { background: #fff; color: #111; display: grid; grid-auto-rows: 1fr; }
.tree li { display: flex; align-items: center; min-height: 0; white-space: nowrap; line-height: 10px; }
.tree span { padding: 0 1px; }
.tree .soft { background: #f0f0f0; }
.ex { width: 6px; height: 6px; flex: none; border: 1px solid #bcc3cc; background: linear-gradient(#6f87a8, #6f87a8) center / 2px 2px no-repeat #fff; }
.ex.open { background: linear-gradient(#6f87a8, #6f87a8) center / 4px 1px no-repeat #fff; }
.ex.none { height: 1px; border: 0; background: #c8c8c8; }
.files { flex: 1; grid-auto-rows: 12px; align-content: start; row-gap: 1px; padding-left: 4px; }
.files .ic { margin: 0 2px 0 4px; width: 10px; height: 10px; }
.layers { flex: 1; min-height: 0; padding: 0 0 8px 4px; border: 1px solid #c8c8c8; border-width: 1px 1px 0; }
.layers .ic { margin: 0 1px 0 5px; width: 10px; height: 10px; }
.layers .sub { margin-left: 2px; padding-left: 9px; border-left: 1px dotted #bbb; }
.layers .sub .ic { margin: 0 1px 0 4px; }

/* drawing area */
.canvas { flex: 1; min-width: 0; position: relative; background: #fff; border-left: 1px solid #8e9196; }
.axes { position: absolute; left: 21px; bottom: 24px; width: 30px; height: 32px; font: 8px/8px "Liberation Serif", serif; }
.axes svg { width: 30px; height: 32px; display: block; }
.axes span { position: absolute; }
.ay { left: 4px; top: 1px; color: #2c3; }
.ax { left: 22px; top: 19px; color: #2450d8; }
.az { left: 4px; top: 20px; color: #e33; }

.win { position: absolute; display: flex; flex-direction: column; background: #f0f0f0; }
.winhead { display: flex; align-items: center; flex: none; height: 18px; background: #2b579a; color: #fff; }
.winhead h2 { flex: 1; }
.winhead .tiny { width: 7px; height: 7px; }
.config { left: 83px; top: 13px; width: 592px; height: 379px; border: 1px solid #b4b6ba; border-top: 0; padding-bottom: 4px; }
.config .winhead { padding: 0 3px 0 4px; gap: 4px; color: #c4d0e2; }
.config .winhead h2 { padding-top: 4px; }
.config .winhead .ib { padding-bottom: 4px; }
.ctabs { display: flex; height: 20px; flex: none; padding: 2px 4px 0; }
.ctabs button { padding: 0 10px 2px 9px; border: 1px solid transparent; border-bottom: 0; }
.ctabs button:first-child { width: 32px; padding: 0 0 2px; }
.ctabs .active { padding: 0 6px 2px; color: #2b70c4; border-color: #ddd; background: #f5f5f5; }
.cribbon { display: flex; flex: none; height: 56px; margin: 0 4px; border: 1px solid #dedede; border-bottom-color: #c4c4c4; color: #444; }
.cgroup { display: flex; flex-direction: column; justify-content: space-between; padding: 2px 2px 0; border-right: 1px solid #ddd; }
.ctools { display: flex; }
.ctools button { width: 18px; display: flex; flex-direction: column; align-items: center; line-height: 12px; white-space: nowrap; }
.ctools svg { width: 13px; height: 13px; }
.cgroup h3 { text-align: center; color: #777; }
.cbody { flex: 1; min-height: 0; display: flex; gap: 2px; margin: 0 4px; }
.ctree { width: 119px; flex: none; display: flex; border: 1px solid #c8c8c8; border-top: 0; background: #fff; overflow: hidden; }
.db { flex: 1; min-width: 0; margin-bottom: -3px; padding-left: 10px; }
.db li { border-left: 1px dotted transparent; }
.db .l1 { padding-left: 5px; margin-left: 3px; border-color: #bbb; }
.db .l2 { padding-left: 12px; margin-left: 3px; border-color: #bbb; }
.db .sel { background: #0a78d7; color: #fff; }
.cscroll { width: 11px; background: #f0f0f0; }
.cscroll i { display: block; width: 2px; height: 139px; margin: 17px 0 0 5px; background: #858585; }
.cview { flex: 1; display: flex; flex-direction: column; border: 1px solid #c8c8c8; border-top: 0; }
.cviewhead { height: 13px; flex: none; display: flex; align-items: center; background: #ececec; border-bottom: 1px solid #d0d0d0; color: #555; }
.cviewbody { flex: 1; display: flex; padding-left: 24px; }
.cviewbody i { flex: 1; background: #fff; }

/* composite table dialog */
.dialog { left: 228px; top: 1px; bottom: -1px; width: 415px; z-index: 2; border: 1px solid #6f9bd3; border-top: 0; color: #777; font-family: "Liberation Mono", "Noto Sans CJK SC", monospace; }
.dialog .winhead { height: 19px; padding: 0 4px 0 5px; font-family: "Noto Sans", "Noto Sans CJK SC", sans-serif; }
.dialog .winhead h2 { padding-top: 3px; }
.dialog .winhead .ib { padding-bottom: 3px; }
.dbody { flex: 1; min-height: 0; display: flex; flex-direction: column; gap: 5px; padding: 5px 10px 11px; }
fieldset { min-width: 0; margin: 0; padding: 6px 8px 7px; border: 1px solid #dfdfdf; border-radius: 2px; }
legend { padding: 0 5px 0 1px; margin-left: -4px; line-height: 12px; }
.fields { display: grid; grid-template-columns: 46px 107px 1fr 104px; column-gap: 4px; row-gap: 7px; align-items: center; margin: -2px 0 -2px 3px; }
.fields label { white-space: nowrap; }
.fields .second { padding-left: 42px; }
.fields input, .geo { width: 100%; height: 14px; background: #fff; color: #222; font-family: Roboto, "Noto Sans CJK SC", sans-serif; }
.fields input { padding: 0 1px; font-size: 7px; line-height: 12px; border-bottom: 1px solid #aaa; }
.fields .focus { font-size: 8px; border-bottom: 2px solid #4c93db; }
.fields .off { background: #cdcdcd; color: #666; }
.grid { display: grid; grid-template: 100px 11px / 1fr 11px; }
.gridclip { overflow: hidden; background: #fff; border: 1px solid #cfcfcf; border-width: 0 0 0 1px; }
table { table-layout: fixed; border-collapse: separate; border-spacing: 0; }
.sys { width: 413px; }
.usr { width: 100%; }
.k0 { width: 13px; } .k1 { width: 25px; } .k2 { width: 42px; } .k3 { width: 67px; }
th, td { padding: 0; font-weight: 400; text-align: left; white-space: nowrap; overflow: hidden; }
thead th { height: 12px; padding-left: 3px; line-height: 11px; background: #e6e6e6; border: 1px solid #cfcfcf; border-width: 0 1px 1px 0; }
thead .corner { background: linear-gradient(135deg, #e6e6e6 55%, #c6c6c6 55%); }
tbody td { height: 10px; padding-left: 2px; line-height: 9px; font-size: 7px; border: 1px solid #dedede; border-width: 0 1px 1px 0; }
tbody td:nth-child(2), tbody td:nth-child(3), tbody td:nth-child(4), tbody td:nth-child(6) { font-size: 6px; color: #444; }
tbody th { text-align: center; line-height: 9px; font-size: 6px; background: #e6e6e6; border: 1px solid #cfcfcf; border-width: 0 1px 1px 0; }
tbody tr:nth-child(even) td { background: #f1f1f1; }
.vbar { display: flex; flex-direction: column; align-items: center; background: #fff; border: 1px solid #d0d0d0; border-width: 1px 1px 0; color: #555; }
.vbar svg { margin: 1px 0; }
.vbar i { flex: 1; width: 100%; border-top: 1px solid #ccc; border-bottom: 4px solid #ccc; }
.hbar { grid-column: 1 / 3; display: flex; align-items: center; padding-right: 11px; background: #cdcdcd; color: #555; }
.hbar svg { width: 11px; height: 10px; padding: 1px; background: #fff; }
.hbar i { width: 195px; height: 9px; margin: 0 auto 0 1px; background: #fff; }
.acts { display: flex; justify-content: flex-end; gap: 3px; margin-top: 8px; }
.btn { width: 48px; height: 15px; background: #fdfdfd; border: 1px solid #cfcfcf; color: #777; }
.btn.primary { border-color: #7fb0e8; }
.grow { flex: 1; display: flex; flex-direction: column; padding-bottom: 6px; }
.usergrid { flex: 1; background: #fff; border: 1px solid #e0e0e0; }
.foot { display: flex; justify-content: flex-end; gap: 5px; margin-right: -1px; }

/* console and status */
.console { flex: none; display: flex; height: 37px; border-top: 4px solid #cbcbcb; background: #fff; }
.log { flex: 1; padding: 1px 0 0 4px; border-top: 1px solid #999; line-height: 13px; }
.log li { padding-left: 1px; }
.log li:nth-child(2) { background: #efefef; }
.logbar { width: 12px; margin-left: 2px; background: #e8e8e8; border-top: 1px solid #999; }
.cmd { flex: none; display: flex; align-items: center; height: 16px; padding-right: 3px; background: #fff; border: 1px solid #9a9a9a; border-width: 1px 0 2px; }
.cmd label { width: 33px; height: 100%; padding: 1px 0 0 5px; border: 1px solid #5b93d0; border-width: 1px 1px 0; line-height: 11px; }
.cmd input { flex: 1; height: 100%; }
.outtabs { flex: none; display: flex; height: 15px; background: #e5e5e5; font-size: 7px; color: #555; border-bottom: 1px solid #d6d6d6; }
.outtabs button { padding: 0 4px; }
.outtabs .active { background: #fafafa; }
.status { flex: none; display: flex; align-items: center; height: 12px; gap: 14px; padding: 0 0 0 5px; font-size: 7px; color: #444; white-space: nowrap; }
.coord { margin-left: auto; margin-right: -8px; }
.toggles { display: flex; gap: 4px; height: 100%; }
.toggles button { padding: 0 5px; }
.toggles .on { background: #cbcbcb; }

/* watermark layer */
.marks { position: absolute; inset: 0; z-index: 5; display: grid; grid-template-columns: repeat(5, 1fr); grid-auto-rows: 222px; place-items: center; overflow: hidden; pointer-events: none; color: rgba(0, 0, 0, .06); }
.marks span { transform: rotate(-30deg); }
```
